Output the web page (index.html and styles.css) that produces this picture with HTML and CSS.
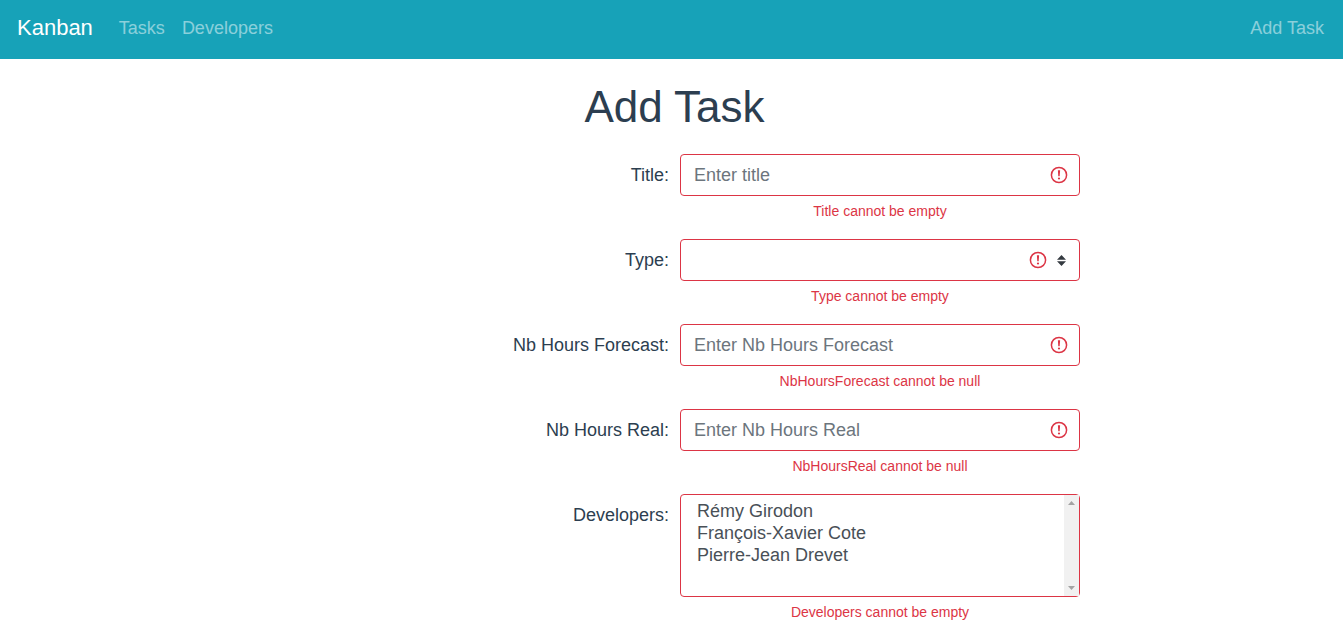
FILE: index.html
```html
<!DOCTYPE html>
<html lang="en">
<head>
<meta charset="utf-8">
<meta name="viewport" content="width=device-width, initial-scale=1">
<title>Kanban</title>
<link rel="stylesheet" href="styles.css">
</head>
<body>
<svg class="sprite" aria-hidden="true">
  <symbol id="alert" viewBox="0 0 18 18">
    <circle cx="9" cy="9" r="7.6" fill="none" stroke="#dc3545" stroke-width="1.5"/>
    <path d="M7.9 4.2h2.2l-.4 6H8.3z" fill="#dc3545"/>
    <circle cx="9" cy="12.5" r="1.1" fill="#dc3545"/>
  </symbol>
</svg>
<nav class="navbar">
  <a class="brand" href="#">Kanban</a>
  <a class="nav-link" href="#">Tasks</a>
  <a class="nav-link" href="#">Developers</a>
  <a class="nav-link nav-end" href="#">Add Task</a>
</nav>
<main class="page">
  <h1 class="title">Add Task</h1>
  <form class="form">
    <div class="row">
      <label class="label" for="title">Title:</label>
      <div class="field">
        <div class="control-wrap">
          <input class="control" id="title" type="text" placeholder="Enter title">
          <svg class="alert"><use href="#alert"/></svg>
        </div>
        <div class="feedback">Title cannot be empty</div>
      </div>
    </div>
    <div class="row">
      <label class="label" for="type">Type:</label>
      <div class="field">
        <div class="control-wrap">
          <select class="control" id="type"><option></option></select>
          <svg class="alert alert-select"><use href="#alert"/></svg>
          <svg class="arrows" viewBox="0 0 9 11"><path d="M0 4.7L4.5 0 9 4.7zM0 6.3h9L4.5 11z" fill="#343a40"/></svg>
        </div>
        <div class="feedback">Type cannot be empty</div>
      </div>
    </div>
    <div class="row">
      <label class="label" for="forecast">Nb Hours Forecast:</label>
      <div class="field">
        <div class="control-wrap">
          <input class="control" id="forecast" type="text" placeholder="Enter Nb Hours Forecast">
          <svg class="alert"><use href="#alert"/></svg>
        </div>
        <div class="feedback">NbHoursForecast cannot be null</div>
      </div>
    </div>
    <div class="row">
      <label class="label" for="real">Nb Hours Real:</label>
      <div class="field">
        <div class="control-wrap">
          <input class="control" id="real" type="text" placeholder="Enter Nb Hours Real">
          <svg class="alert"><use href="#alert"/></svg>
        </div>
        <div class="feedback">NbHoursReal cannot be null</div>
      </div>
    </div>
    <div class="row">
      <label class="label" for="developers">Developers:</label>
      <div class="field">
        <div class="control-wrap">
          <select class="control listbox" id="developers" multiple size="4">
            <option>Rémy Girodon</option>
            <option>François-Xavier Cote</option>
            <option>Pierre-Jean Drevet</option>
          </select>
          <div class="scrollbar" aria-hidden="true">
            <svg class="scroll-arrow" viewBox="0 0 7 4"><path d="M0 4L3.5 0 7 4z"/></svg>
            <svg class="scroll-arrow" viewBox="0 0 7 4"><path d="M0 0h7L3.5 4z"/></svg>
          </div>
        </div>
        <div class="feedback">Developers cannot be empty</div>
      </div>
    </div>
  </form>
</main>
</body>
</html>
```
FILE: styles.css
```css
*, *::before, *::after { box-sizing: border-box; }

body {
  margin: 0;
  background: #fff;
  color: #2c3e50;
  font: 18px/26px "Liberation Sans", Arial, sans-serif;
}

.sprite { display: none; }

.navbar {
  display: flex;
  align-items: center;
  height: 59px;
  padding: 0 19px 3px 17px;
  background: #17a2b8;
}

.brand {
  margin-right: 26px;
  color: #fff;
  font-size: 22px;
  text-decoration: none;
}

.nav-link {
  margin-right: 17px;
  color: rgba(255, 255, 255, .5);
  text-decoration: none;
}

.nav-end { margin: 0 0 0 auto; }

.page { padding: 21px 0 0 6px; }

.title {
  margin: 0 0 21px;
  font-size: 44px;
  font-weight: 500;
  line-height: 53px;
  text-align: center;
}

.row {
  display: grid;
  grid-template-columns: minmax(0, 400px) minmax(0, 400px);
  column-gap: 11px;
  justify-content: center;
  margin-bottom: 17px;
}

.label {
  padding-top: 8px;
  text-align: right;
}

.control-wrap { position: relative; }

.control {
  display: block;
  width: 100%;
  height: 42px;
  margin: 0;
  padding: 7px 13px;
  border: 1px solid #dc3545;
  border-radius: 4px;
  outline: 0;
  background: #fff;
  color: #495057;
  font: inherit;
  appearance: none;
}

.control::placeholder {
  color: #6c757d;
  opacity: 1;
}

.alert {
  position: absolute;
  top: 12px;
  right: 12px;
  width: 18px;
  height: 18px;
  pointer-events: none;
}

.alert-select { right: 33px; }

.arrows {
  position: absolute;
  top: 16px;
  right: 14px;
  width: 9px;
  height: 11px;
  pointer-events: none;
}

.listbox {
  height: 103px;
  padding: 6px 0 5px 14px;
  scrollbar-width: none;
}

.listbox option {
  min-height: 22px;
  padding: 0 2px;
  line-height: 23px;
}

.scrollbar {
  position: absolute;
  top: 1px;
  right: 1px;
  bottom: 1px;
  display: flex;
  flex-direction: column;
  align-items: center;
  justify-content: space-between;
  width: 15px;
  padding: 6px 0;
  background: #f1f1f1;
  pointer-events: none;
}

.scroll-arrow {
  width: 7px;
  height: 4px;
  fill: #a3a3a3;
}

.feedback {
  margin-top: 5px;
  color: #dc3545;
  font-size: 14px;
  line-height: 21px;
  text-align: center;
}
```
